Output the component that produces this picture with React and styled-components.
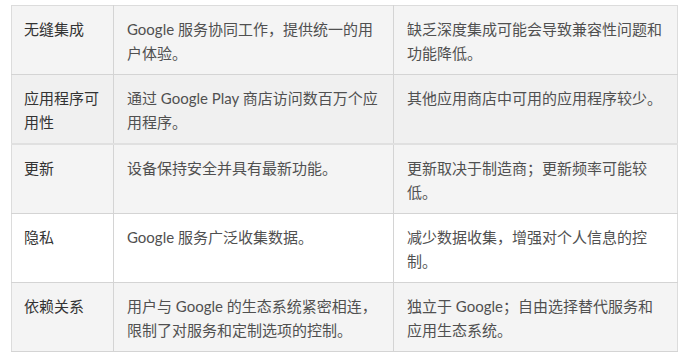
import styled, { createGlobalStyle } from "styled-components";

const rows = [
  {
    title: "无缝集成",
    pro: "Google 服务协同工作，提供统一的用户体验。",
    con: "缺乏深度集成可能会导致兼容性问题和功能降低。",
    bg: "#f4f4f4",
  },
  {
    title: "应用程序可用性",
    pro: "通过 Google Play 商店访问数百万个应用程序。",
    con: "其他应用商店中可用的应用程序较少。",
    bg: "#f0f0f0",
  },
  {
    title: "更新",
    pro: "设备保持安全并具有最新功能。",
    con: "更新取决于制造商；更新频率可能较低。",
    bg: "#f4f4f4",
  },
  {
    title: "隐私",
    pro: "Google 服务广泛收集数据。",
    con: "减少数据收集，增强对个人信息的控制。",
    bg: "#ffffff",
  },
  {
    title: "依赖关系",
    pro: "用户与 Google 的生态系统紧密相连，限制了对服务和定制选项的控制。",
    con: "独立于 Google；自由选择替代服务和应用生态系统。",
    bg: "#f4f4f4",
  },
];

export default () => (
  <>
    <GlobalStyle />
    <Wrapper>
      <Table>
        <colgroup>
          <col style={{ width: 102 }} />
          <col style={{ width: 280 }} />
          <col style={{ width: 284 }} />
        </colgroup>
        <tbody>
          {rows.map((row) => (
            <Row key={row.title} $bg={row.bg}>
              <Title>{row.title}</Title>
              <Cell>{row.pro}</Cell>
              <Cell>{row.con}</Cell>
            </Row>
          ))}
        </tbody>
      </Table>
    </Wrapper>
  </>
);

const GlobalStyle = createGlobalStyle`
  body {
    margin: 0;
    background: #ffffff;
    font-family: "Lato", "Noto Sans CJK SC", sans-serif;
  }
`;

const Wrapper = styled.div`
  padding: 5px 0 0 11px;
`;

const Table = styled.table`
  width: 666px;
  table-layout: fixed;
  border-collapse: collapse;
  border: 1px solid #dcdcdc;
`;

const Row = styled.tr`
  background: ${(p) => p.$bg};
  border-bottom: 1px solid #d4d4d4;

  &:nth-child(2) {
    border-bottom: 2px solid #e0e0e0;
  }
`;

const Cell = styled.td`
  padding: 11px 12px 9px 13px;
  vertical-align: top;
  font-size: 15px;
  line-height: 24px;
  color: #505050;
  border-left: 1px solid #d4d4d4;
  word-break: break-all;
`;

const Title = styled(Cell)`
  padding-left: 12px;
  color: #333333;
  font-weight: 400;
  border-left: none;
`;
